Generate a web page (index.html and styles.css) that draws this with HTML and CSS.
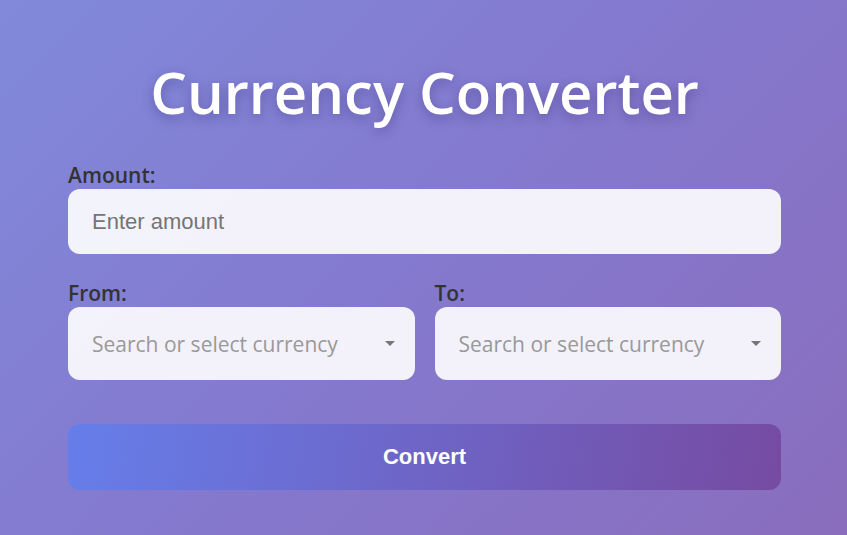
FILE: index.html
```html
<!DOCTYPE html>
<html lang="en">
<head>
<meta charset="utf-8">
<title>Currency Converter</title>
<link rel="stylesheet" href="styles.css">
</head>
<body>
<main class="page">
  <h1 class="title">Currency Converter</h1>
  <form class="form">
    <div class="field">
      <label class="label" for="amount">Amount:</label>
      <input class="input" id="amount" type="text" placeholder="Enter amount">
    </div>
    <div class="row">
      <div class="field">
        <label class="label">From:</label>
        <div class="select">
          <span class="select-text">Search or select currency</span>
          <span class="caret"></span>
        </div>
      </div>
      <div class="field">
        <label class="label">To:</label>
        <div class="select">
          <span class="select-text">Search or select currency</span>
          <span class="caret"></span>
        </div>
      </div>
    </div>
    <button class="button" type="button">Convert</button>
  </form>
</main>
</body>
</html>
```

FILE: styles.css
```css
* { box-sizing: border-box; }
html, body { margin: 0; height: 100%; }
body {
  background: linear-gradient(135deg, #8189db 0%, #8479ce 50%, #8a6dbd 100%);
  font-family: "Open Sans", "Noto Sans", sans-serif;
}
.page {
  width: 715px;
  margin: 0 auto;
  padding: 52px 0 0 2px;
}
.title {
  margin: 0;
  text-align: center;
  color: #fff;
  font-size: 58px;
  font-weight: 600;
  line-height: 80px;
  text-shadow: 0 4px 12px rgba(40, 30, 100, 0.35);
}
.form {
  margin-top: 33px;
  display: flex;
  flex-direction: column;
}
.field {
  display: flex;
  flex-direction: column;
  flex: 1;
}
.label {
  color: #333;
  font-size: 21px;
  font-weight: 600;
  line-height: 20px;
  margin-bottom: 4px;
}
.input {
  height: 65px;
  border: none;
  border-radius: 12px;
  background: rgba(255, 255, 255, 0.9);
  padding: 0 24px;
  font-family: "Liberation Sans", Arial, sans-serif;
  font-size: 22px;
  color: #333;
  outline: none;
}
.input::placeholder { color: #757575; }
.row {
  display: flex;
  gap: 20px;
  margin-top: 29px;
}
.select {
  height: 73px;
  border-radius: 12px;
  background: rgba(255, 255, 255, 0.9);
  padding: 0 20px 0 24px;
  display: flex;
  align-items: center;
  justify-content: space-between;
}
.select-text {
  color: #999;
  font-size: 21px;
}
.caret {
  width: 0;
  height: 0;
  border-left: 5px solid transparent;
  border-right: 5px solid transparent;
  border-top: 5px solid #777;
}
.button {
  margin-top: 44px;
  height: 66px;
  border: none;
  border-radius: 12px;
  background: linear-gradient(100deg, #667eea 0%, #764ba2 100%);
  color: #fff;
  font-family: "Liberation Sans", Arial, sans-serif;
  font-size: 22px;
  font-weight: 700;
}
```
